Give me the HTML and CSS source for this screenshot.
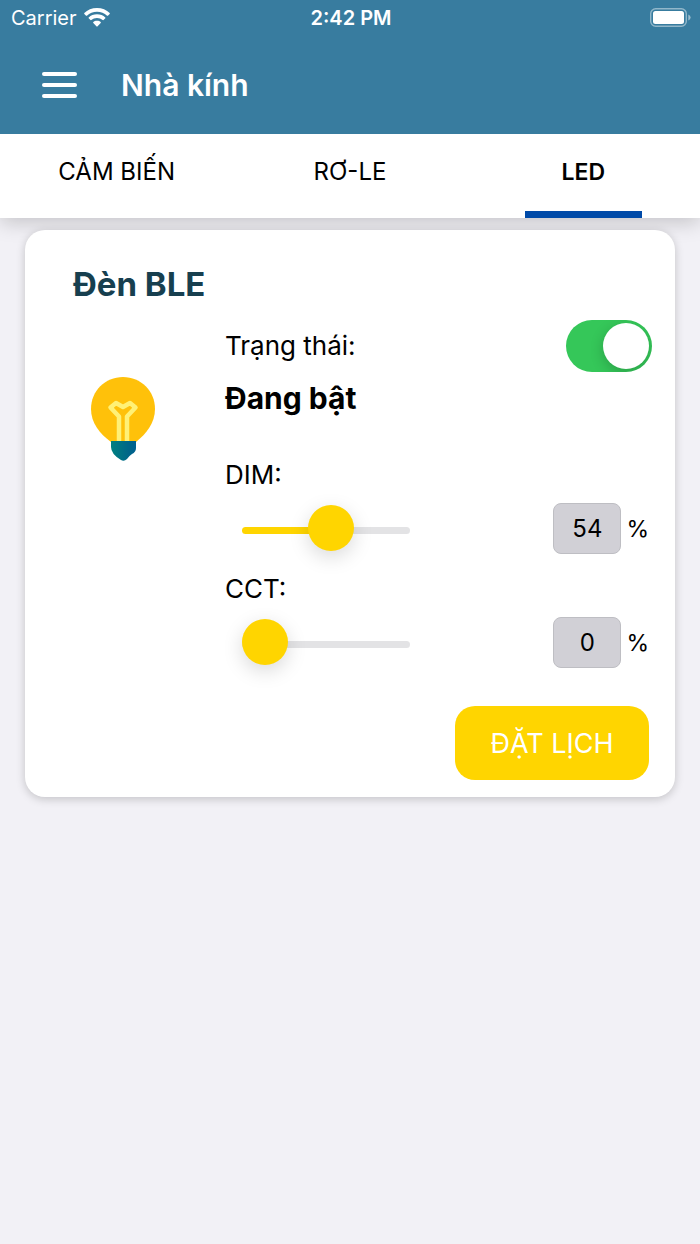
FILE: index.html
```
<!DOCTYPE html>
<html lang="vi">
<head>
    <meta charset="UTF-8">
    <meta name="viewport" content="width=device-width, initial-scale=1.0">
    <title>Nhà kính</title>
    <link rel="stylesheet" href="styles.css">
</head>
<body>

    <header class="app-header">
        <div class="status-bar">
            <div class="carrier">
                <span>Carrier</span>
                <svg width="26" height="19" viewBox="0 0 26 19" fill="#fff" aria-hidden="true">
                    <path d="M13 0C8 0 3.400 1.900 0.300 5.100Q0 5.500 0.300 5.900L2.100 7.700Q2.500 8 2.900 7.700C5.600 5.100 9.100 3.700 13 3.700S20.400 5.100 23.100 7.700Q23.500 8 23.900 7.700L25.700 5.900Q26 5.500 25.700 5.100C22.600 1.900 18 0 13 0Z"/>
                    <path d="M13 6.300C9.700 6.300 6.800 7.500 4.700 9.500Q4.300 9.900 4.700 10.300L6.500 12.100Q6.900 12.400 7.300 12.100C8.900 10.700 10.800 9.900 13 9.900S17.100 10.700 18.700 12.100Q19.100 12.400 19.500 12.100L21.300 10.300Q21.700 9.900 21.300 9.500C19.200 7.500 16.300 6.300 13 6.300Z"/>
                    <path d="M13 12.800C11.400 12.800 10.200 13.300 9.300 14.100Q8.900 14.500 9.300 14.900L12.600 18.400Q13 18.800 13.400 18.400L16.700 14.900Q17.100 14.500 16.700 14.100C15.800 13.300 14.600 12.800 13 12.800Z"/>
                </svg>
            </div>
            <span class="clock">2:42 PM</span>
            <svg class="battery" width="41" height="19" viewBox="0 0 41 19" aria-hidden="true">
                <rect x="0.700" y="0.700" width="35.600" height="17.600" rx="5" fill="none" stroke="#fff" stroke-opacity="0.450" stroke-width="1.400"/>
                <rect x="3" y="3" width="31" height="13" rx="2.500" fill="#fff"/>
                <path d="M38.300 6.500Q40.600 7.400 40.600 9.500T38.300 12.500Z" fill="#fff" fill-opacity="0.500"/>
            </svg>
        </div>
        <div class="title-bar">
            <button class="menu-button" type="button" aria-label="Menu">
                <span></span>
                <span></span>
                <span></span>
            </button>
            <h1>Nhà kính</h1>
        </div>
    </header>

    <nav class="tabs">
        <a class="tab" href="#sensor">CẢM BIẾN</a>
        <a class="tab" href="#relay">RƠ-LE</a>
        <a class="tab active" href="#led">LED</a>
    </nav>

    <main>
        <section class="card">
            <h2>Đèn BLE</h2>
            <div class="card-body">
                <div class="lamp">
                    <svg width="64" height="84" viewBox="0 0 64 84" aria-hidden="true">
                        <defs>
                            <linearGradient id="base" x1="0" x2="1" y1="0" y2="0">
                                <stop offset="0" stop-color="#008080"/>
                                <stop offset="0.700" stop-color="#006688"/>
                                <stop offset="1" stop-color="#006090"/>
                            </linearGradient>
                        </defs>
                        <path d="M32 0C14 0 0 14 0 32C0 46 9 57 20 65H45C55 57 64 46 64 32C64 14 50 0 32 0Z" fill="#ffc10a"/>
                        <path d="M28 65V39.500L19.500 30.500L25 26L32 30L39 26L44.500 30.500L36 39.500V65" fill="none" stroke="#fff176" stroke-width="4.500" stroke-linejoin="round"/>
                        <path d="M20 64H45V71Q45 75 41 77Q38 79 36 82Q33 85 30 83Q20 77 20 70Z" fill="url(#base)"/>
                    </svg>
                </div>

                <div class="controls">
                    <div class="row">
                        <label for="power">Trạng thái:</label>
                        <input class="switch" type="checkbox" role="switch" id="power" checked>
                    </div>
                    <p class="state" id="state">Đang bật</p>

                    <div class="setting">
                        <label for="dim">DIM:</label>
                        <div class="row">
                            <input class="slider" type="range" id="dim" min="0" max="100" value="54" style="--value: 54%">
                            <div class="amount">
                                <input class="number" type="text" inputmode="numeric" value="54" aria-label="DIM %">
                                <span>%</span>
                            </div>
                        </div>
                    </div>

                    <div class="setting">
                        <label for="cct">CCT:</label>
                        <div class="row">
                            <input class="slider" type="range" id="cct" min="0" max="100" value="0" style="--value: 0%">
                            <div class="amount">
                                <input class="number" type="text" inputmode="numeric" value="0" aria-label="CCT %">
                                <span>%</span>
                            </div>
                        </div>
                    </div>

                    <button class="schedule-button" type="button">ĐẶT LỊCH</button>
                </div>
            </div>
        </section>
    </main>

    <script>
        // Keep each slider and its number box in step
        document.querySelectorAll('.setting').forEach(setting => {
            var slider = setting.querySelector('.slider');
            var number = setting.querySelector('.number');

            slider.addEventListener('input', () => {
                number.value = slider.value;
                slider.style.setProperty('--value', slider.value + '%');
            });

            number.addEventListener('change', () => {
                slider.value = Number(number.value) || 0;
                number.value = slider.value;
                slider.style.setProperty('--value', slider.value + '%');
            });
        });

        // Show whether the lamp is on
        document.getElementById('power').addEventListener('change', event => {
            document.getElementById('state').textContent = event.target.checked ? 'Đang bật' : 'Đang tắt';
        });
    </script>

</body>
</html>
```
FILE: styles.css
```
:root {
    --blue: #387c9f;
    --yellow: #ffd500;
    --background: #f2f1f6;
}

* {
    box-sizing: border-box;
}

body {
    margin: 0;
    min-height: 100vh;
    font-family: Inter, 'Liberation Sans', sans-serif;
    font-size: 26px;
    line-height: 32px;
    color: #000;
    background: var(--background);
}

/* Header */
.app-header {
    position: relative; /* Keep the tab shadow below the header */
    z-index: 1;
    background: var(--blue);
    color: #fff;
}

.status-bar {
    display: grid;
    grid-template-columns: 1fr auto 1fr;
    align-items: center;
    height: 35px;
    padding: 0 9px 0 11px;
    font-size: 20px;
    line-height: 24px;
}

.carrier {
    display: flex;
    align-items: center;
    gap: 7px;
}

.clock {
    font-weight: 600;
}

.battery {
    justify-self: end;
}

.title-bar {
    display: flex;
    align-items: center;
    gap: 44px;
    height: 99px;
    padding: 0 42px;
}

.menu-button {
    display: flex;
    flex-direction: column;
    gap: 7px;
    width: 35px;
    padding: 0;
    border: none;
    background: none;
    cursor: pointer;
}

.menu-button span {
    height: 4px;
    border-radius: 2px;
    background: #fff;
}

h1 {
    margin: 0;
    font-size: 30px;
    line-height: 36px;
    font-weight: 600;
}

/* Tabs */
.tabs {
    display: flex;
    height: 84px;
    background: #fff;
    box-shadow: 0 4px 20px rgba(0, 0, 0, 0.2);
}

.tab {
    display: flex;
    flex: 1;
    flex-direction: column;
    align-items: center;
    justify-content: space-between;
    padding-top: 22px;
    font-size: 24px;
    color: #000;
    text-decoration: none;
}

.tab.active {
    font-size: 23px;
    font-weight: 600;
}

.tab.active::after {
    content: '';
    width: 50%;
    height: 7px;
    background: #004aa8;
}

/* Lamp card */
.card {
    margin: 12px 25px;
    padding: 34px 23px 17px 0;
    border-radius: 20px;
    background: #fff;
    box-shadow: 0 2px 10px rgba(0, 0, 0, 0.2);
}

h2 {
    margin: 0 0 16px 48px;
    font-size: 33px;
    line-height: 40px;
    font-weight: 700;
    color: #173f4f;
}

.card-body {
    display: grid;
    grid-template-columns: 200px 1fr;
}

.lamp {
    display: flex;
    justify-content: center;
    align-items: flex-start;
    padding: 57px 4px 0 0;
}

.controls {
    display: flex;
    flex-direction: column;
}

.row {
    display: flex;
    align-items: center;
    justify-content: space-between;
}

.state {
    margin: 8px 0 24px;
    font-size: 30px;
    line-height: 36px;
    font-weight: 700;
}

.setting {
    margin-top: 19px;
    padding-right: 3px;
}

.setting .row {
    margin-top: 12px;
}

.switch {
    appearance: none;
    display: flex;
    width: 86px;
    height: 52px;
    margin: 0;
    padding: 3px;
    border-radius: 26px;
    background: #d1d1d6;
    overflow: hidden;
    cursor: pointer;
}

.switch::before {
    content: '';
    width: 46px;
    height: 46px;
    border-radius: 50%;
    background: #fff;
    box-shadow: 0 4px 14px rgba(0, 0, 0, 0.2);
}

.switch:checked {
    justify-content: flex-end;
    background: #35c759;
}

/* Sliders */
.slider {
    appearance: none;
    width: 168px;
    height: 46px;
    margin: 4px 0 0 17px;
    background: none;
    cursor: pointer;
}

.slider::-webkit-slider-runnable-track {
    height: 7px;
    border-radius: 4px;
    background: linear-gradient(to right, var(--yellow) var(--value), #e3e3e5 var(--value));
}

.slider::-webkit-slider-thumb {
    appearance: none;
    width: 46px;
    height: 46px;
    margin-top: -22px;
    border-radius: 50%;
    background: var(--yellow);
    box-shadow: 0 6px 20px rgba(0, 0, 0, 0.15);
}

.amount {
    display: flex;
    align-items: center;
    gap: 5px;
    font-size: 23px;
}

.number {
    width: 68px;
    height: 51px;
    padding: 0;
    border: 1px solid #bebec3;
    border-radius: 8px;
    background: #d1d0d6;
    font: inherit;
    font-size: 24px;
    text-align: center;
}

.schedule-button {
    align-self: flex-end;
    width: 194px;
    height: 74px;
    margin: 38px 3px 0 0;
    border: none;
    border-radius: 20px;
    background: var(--yellow);
    color: #fff;
    font-family: inherit;
    font-size: 27px;
    cursor: pointer;
}
```
